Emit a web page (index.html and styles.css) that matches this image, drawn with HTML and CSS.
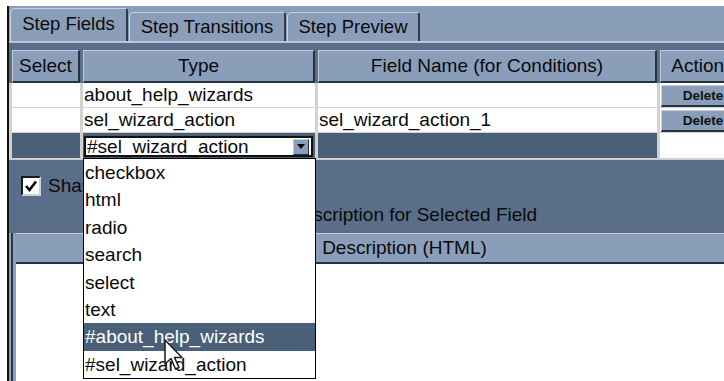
FILE: index.html
```html
<!DOCTYPE html>
<html>
<head>
<meta charset="utf-8">
<link rel="stylesheet" href="styles.css">
</head>
<body>
<div class="win">
  <div class="tabs">
    <div class="tab tab-sel">Step Fields</div>
    <div class="tab tab-2">Step Transitions</div>
    <div class="tab tab-3">Step Preview</div>
  </div>
  <div class="panel">
    <div class="hdr">
      <div class="hc c-sel">Select</div>
      <div class="hc c-type">Type</div>
      <div class="hc c-field">Field Name (for Conditions)</div>
      <div class="hc c-act">Actions</div>
    </div>
    <div class="rows">
      <div class="row">
        <div class="dc c-sel"></div>
        <div class="dc c-type">about_help_wizards</div>
        <div class="dc c-field"></div>
        <div class="dc c-act"><div class="btn">Delete</div></div>
      </div>
      <div class="row">
        <div class="dc c-sel"></div>
        <div class="dc c-type">sel_wizard_action</div>
        <div class="dc c-field">sel_wizard_action_1</div>
        <div class="dc c-act"><div class="btn">Delete</div></div>
      </div>
      <div class="row row-new">
        <div class="dc c-sel dark"></div>
        <div class="dc c-type dark">
          <div class="combo">
            <span class="combo-text">#sel_wizard_action</span>
            <span class="combo-arrow"><svg width="8" height="5" viewBox="0 0 8 5"><polygon points="0,0 8,0 4,5" fill="#000"/></svg></span>
          </div>
        </div>
        <div class="dc c-field dark"></div>
        <div class="dc c-act"></div>
      </div>
    </div>
    <div class="lower">
      <div class="chkrow">
        <span class="chk"><svg width="14" height="14" viewBox="0 0 14 14"><polyline points="2,7 5.5,11 12,2.5" fill="none" stroke="#000" stroke-width="2.6"/></svg></span>
        <span class="chklabel">Shared</span>
      </div>
      <div class="caption">Description for Selected Field</div>
      <div class="desc">
        <div class="desc-inner">
          <div class="desc-head">Description (HTML)</div>
          <div class="desc-body"></div>
        </div>
      </div>
    </div>
  </div>
</div>

<div class="dropdown">
  <div class="opt">checkbox</div>
  <div class="opt">html</div>
  <div class="opt">radio</div>
  <div class="opt">search</div>
  <div class="opt">select</div>
  <div class="opt">text</div>
  <div class="opt opt-hi">#about_help_wizards</div>
  <div class="opt">#sel_wizard_action</div>
</div>

<svg class="cursor" width="22" height="34" viewBox="0 0 22 34">
  <polygon points="1,1 1,25 7,19.5 11.5,30 15,28.5 10.5,18.5 18,18.5" fill="#fff" stroke="#222" stroke-width="1.6" stroke-linejoin="round"/>
</svg>
</body>
</html>
```

FILE: styles.css
```css
html, body {
  margin: 0;
  padding: 0;
  background: #fff;
  overflow: hidden;
  width: 724px;
  height: 381px;
}
body {
  font-family: "Liberation Sans", Arial, sans-serif;
  font-size: 19px;
  color: #0a0a0a;
  position: relative;
}
.win {
  margin: 6px 0 0 7px;
  width: 808px;
  height: 375px;
  border-left: 2px solid #111;
  background: #8a9eba;
  display: flex;
  flex-direction: column;
}
.tabs {
  height: 33px;
  padding: 2px 0 0 1px;
  display: flex;
  align-items: flex-end;
  gap: 1px;
  border-bottom: 2px solid #b9c6d6;
  background: #8a9eba;
  font-size: 18.5px;
}
.tab {
  box-sizing: border-box;
  height: 29px;
  display: flex;
  align-items: center;
  justify-content: center;
  padding-bottom: 1px;
  border-top: 1px solid #c9d3df;
  border-left: 1px solid #c9d3df;
  border-right: 2px solid #2e3a4a;
  border-radius: 5px 3px 0 0;
  background: #8a9eba;
}
.tab-sel { width: 118px; height: 33px; padding-bottom: 3px; }
.tab-2 { width: 157px; }
.tab-3 { width: 133px; }

.panel {
  flex: 1;
  background: #5b6f8c;
  padding-top: 7px;
  display: flex;
  flex-direction: column;
}
.hdr {
  display: flex;
  gap: 3px;
  padding-left: 3px;
  height: 33px;
}
.hc {
  box-sizing: border-box;
  background: #8a9eba;
  border-top: 1px solid #c2cddb;
  border-left: 1px solid #c2cddb;
  border-right: 2px solid #27323f;
  border-bottom: 2px solid #27323f;
  display: flex;
  align-items: center;
  justify-content: center;
  padding-bottom: 1px;
}
.c-sel { width: 68px; }
.c-type { width: 232px; }
.c-field { width: 339px; }
.c-act { width: 86px; }

.rows {
  display: flex;
  flex-direction: column;
  gap: 1px;
  background: #d2d2d2;
  padding: 0 0 1px 3px;
  width: 740px;
}
.row {
  display: flex;
  gap: 3px;
  height: 24px;
}
.dc {
  box-sizing: border-box;
  background: #fff;
  display: flex;
  align-items: center;
  padding-left: 1px;
  white-space: nowrap;
}
.dc.c-act { align-items: flex-start; padding: 2px 0 0 1px; }
.dark { background: #4a6079; }
.btn {
  box-sizing: border-box;
  width: 86px;
  height: 22px;
  background: #8a9eba;
  border-top: 1px solid #c2cddb;
  border-left: 1px solid #c2cddb;
  border-right: 2px solid #27323f;
  border-bottom: 2px solid #27323f;
  font-size: 13.5px;
  font-weight: bold;
  color: #111;
  display: flex;
  align-items: center;
  justify-content: center;
}
.row-new { height: 25px; }
.row-new .c-type { padding: 3px 2px 1px 1px; align-items: stretch; }
.combo {
  flex: 1;
  box-sizing: border-box;
  background: #fff;
  border: 2px solid #111;
  display: flex;
  align-items: center;
  justify-content: space-between;
  padding: 0 2px 0 1px;
}
.combo-text { line-height: 16px; }
.combo-arrow {
  box-sizing: border-box;
  width: 16px;
  height: 16px;
  background: #8a9eba;
  border-top: 1px solid #c2cddb;
  border-left: 1px solid #c2cddb;
  border-right: 1px solid #27323f;
  border-bottom: 1px solid #27323f;
  display: flex;
  align-items: center;
  justify-content: center;
}

.lower {
  flex: 1;
  border-top: 1px solid #c4ccd6;
  background: #5a6e8a;
  padding-top: 15px;
  display: flex;
  flex-direction: column;
}
.chkrow {
  display: flex;
  align-items: center;
  height: 22px;
  padding-left: 12px;
  gap: 7px;
}
.chk {
  box-sizing: border-box;
  width: 20px;
  height: 20px;
  background: #fff;
  border-top: 2px solid #1a1a1a;
  border-left: 2px solid #1a1a1a;
  border-right: 2px solid #c9d2dd;
  border-bottom: 2px solid #c9d2dd;
  display: flex;
  align-items: center;
  justify-content: center;
}
.caption {
  margin-top: 7px;
  height: 22px;
  line-height: 22px;
  text-align: center;
}
.desc {
  margin-top: 7px;
  width: 782px;
  flex: 1;
  border-left: 2px solid #8a9eba;
  display: flex;
}
.desc-inner {
  flex: 1;
  border-left: 2px solid #2c3a4c;
  padding-left: 3px;
  background: #8a9eba;
  display: flex;
  flex-direction: column;
}
.desc-head {
  box-sizing: border-box;
  height: 31px;
  border-top: 1px solid #c2cddb;
  border-bottom: 2px solid #27323f;
  display: flex;
  align-items: center;
  justify-content: center;
  padding-bottom: 1px;
}
.desc-body { flex: 1; background: #fff; }

.dropdown {
  position: absolute;
  left: 83px;
  top: 158px;
  width: 233px;
  height: 221px;
  box-sizing: border-box;
  border: 1px solid #000;
  background: #fff;
}
.opt {
  height: 27.4px;
  line-height: 27.4px;
  padding-left: 1px;
  white-space: nowrap;
}
.opt-hi { background: #4a6079; color: #fff; }
.cursor {
  position: absolute;
  left: 164px;
  top: 339px;
}
```
